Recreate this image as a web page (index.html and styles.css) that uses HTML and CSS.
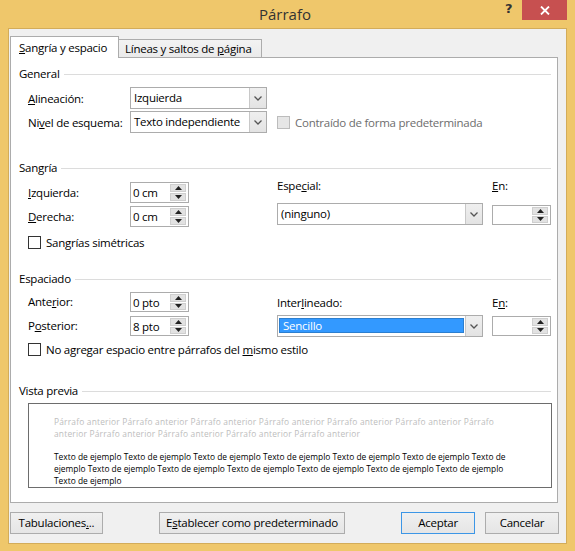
FILE: index.html
```html
<!DOCTYPE html>
<html lang="es">
<head>
<meta charset="utf-8">
<title>Párrafo</title>
<link rel="stylesheet" href="styles.css">
</head>
<body>
<div class="window">
  <div class="titlebar">
    <div class="title">Párrafo</div>
    <div class="help">?</div>
    <div class="close">
      <svg width="10" height="9" viewBox="0 0 10 9"><path d="M1 0.5 L9 8.5 M9 0.5 L1 8.5" stroke="#fff" stroke-width="1.8" fill="none"/></svg>
    </div>
  </div>
  <div class="client">
    <div class="tabs">
      <div class="tab active"><u>S</u>angría y espacio</div>
      <div class="tab">Líneas y saltos de <u>p</u>ágina</div>
    </div>
    <div class="page">
      <div class="ghead first">General</div>
      <div class="frow r1">
        <div class="flabel"><u>A</u>lineación:</div>
        <div class="select w137"><div class="val">Izquierda</div><div class="arrow"><svg width="8" height="5" viewBox="0 0 8 5"><path d="M0.5 0.5 L4 4 L7.5 0.5" stroke="#555" stroke-width="1.3" fill="none"/></svg></div></div>
      </div>
      <div class="frow r2">
        <div class="flabel">Ni<u>v</u>el de esquema:</div>
        <div class="select w137"><div class="val">Texto independiente</div><div class="arrow"><svg width="8" height="5" viewBox="0 0 8 5"><path d="M0.5 0.5 L4 4 L7.5 0.5" stroke="#555" stroke-width="1.3" fill="none"/></svg></div></div>
        <div class="cbwrap dis"><div class="cb"></div><span>Contraído de forma predeterminada</span></div>
      </div>

      <div class="ghead sec">Sangría</div>
      <div class="grid g-sangria">
        <div class="lab a-end c1 ra"><u>I</u>zquierda:</div>
        <div class="spin c2 ra a-end"><div class="val">0 cm</div><div class="btns"><div class="sb"><svg width="7" height="4" viewBox="0 0 7 4"><path d="M0 4 L3.5 0 L7 4Z" fill="#222"/></svg></div><div class="sb"><svg width="7" height="4" viewBox="0 0 7 4"><path d="M0 0 L3.5 4 L7 0Z" fill="#222"/></svg></div></div></div>
        <div class="lab top c4 ra">Espe<u>c</u>ial:</div>
        <div class="lab top c6 ra"><u>E</u>n:</div>
        <div class="lab c1 rb mt3"><u>D</u>erecha:</div>
        <div class="spin c2 rb mt3"><div class="val">0 cm</div><div class="btns"><div class="sb"><svg width="7" height="4" viewBox="0 0 7 4"><path d="M0 4 L3.5 0 L7 4Z" fill="#222"/></svg></div><div class="sb"><svg width="7" height="4" viewBox="0 0 7 4"><path d="M0 0 L3.5 4 L7 0Z" fill="#222"/></svg></div></div></div>
        <div class="select c4 rb"><div class="val">(ninguno)</div><div class="arrow"><svg width="8" height="5" viewBox="0 0 8 5"><path d="M0.5 0.5 L4 4 L7.5 0.5" stroke="#555" stroke-width="1.3" fill="none"/></svg></div></div>
        <div class="spin small c6 rb mt2"><div class="val"></div><div class="btns"><div class="sb"><svg width="7" height="4" viewBox="0 0 7 4"><path d="M0 4 L3.5 0 L7 4Z" fill="#222"/></svg></div><div class="sb"><svg width="7" height="4" viewBox="0 0 7 4"><path d="M0 0 L3.5 4 L7 0Z" fill="#222"/></svg></div></div></div>
      </div>
      <div class="cbrow cb-s"><div class="cb"></div><span>San<u>g</u>rías simétricas</span></div>

      <div class="ghead sec2">Espaciado</div>
      <div class="grid g-esp">
        <div class="lab lh20 a-end c1 ra">Ante<u>r</u>ior:</div>
        <div class="spin small c2 ra a-end"><div class="val">0 pto</div><div class="btns"><div class="sb"><svg width="7" height="4" viewBox="0 0 7 4"><path d="M0 4 L3.5 0 L7 4Z" fill="#222"/></svg></div><div class="sb"><svg width="7" height="4" viewBox="0 0 7 4"><path d="M0 0 L3.5 4 L7 0Z" fill="#222"/></svg></div></div></div>
        <div class="lab top8 c4 ra">Inter<u>l</u>ineado:</div>
        <div class="lab top8 c6 ra">E<u>n</u>:</div>
        <div class="lab lh20 c1 rb mt4">P<u>o</u>sterior:</div>
        <div class="spin small c2 rb mt4"><div class="val">8 pto</div><div class="btns"><div class="sb"><svg width="7" height="4" viewBox="0 0 7 4"><path d="M0 4 L3.5 0 L7 4Z" fill="#222"/></svg></div><div class="sb"><svg width="7" height="4" viewBox="0 0 7 4"><path d="M0 0 L3.5 4 L7 0Z" fill="#222"/></svg></div></div></div>
        <div class="select c4 rb mt3"><div class="val"><span class="hl">Sencillo</span></div><div class="arrow"><svg width="8" height="5" viewBox="0 0 8 5"><path d="M0.5 0.5 L4 4 L7.5 0.5" stroke="#555" stroke-width="1.3" fill="none"/></svg></div></div>
        <div class="spin small c6 rb mt4"><div class="val"></div><div class="btns"><div class="sb"><svg width="7" height="4" viewBox="0 0 7 4"><path d="M0 4 L3.5 0 L7 4Z" fill="#222"/></svg></div><div class="sb"><svg width="7" height="4" viewBox="0 0 7 4"><path d="M0 0 L3.5 4 L7 0Z" fill="#222"/></svg></div></div></div>
      </div>
      <div class="cbrow cb-e"><div class="cb"></div><span>No agregar espacio entre párrafos del <u>m</u>ismo estilo</span></div>

      <div class="ghead sec3">Vista previa</div>
      <div class="preview">
        <div class="prev-block gray">
          <div class="pl">Párrafo anterior Párrafo anterior Párrafo anterior Párrafo anterior Párrafo anterior Párrafo anterior Párrafo</div>
          <div class="pl">anterior Párrafo anterior Párrafo anterior Párrafo anterior Párrafo anterior</div>
        </div>
        <div class="prev-block sample">
          <div class="pl">Texto de ejemplo Texto de ejemplo Texto de ejemplo Texto de ejemplo Texto de ejemplo Texto de ejemplo Texto de</div>
          <div class="pl">ejemplo Texto de ejemplo Texto de ejemplo Texto de ejemplo Texto de ejemplo Texto de ejemplo Texto de ejemplo</div>
          <div class="pl">Texto de ejemplo</div>
        </div>
      </div>
    </div>
    <div class="buttons">
      <div class="btn b-tab">Tabulaciones<u>.</u>..</div>
      <div class="btn b-def">E<u>s</u>tablecer como predeterminado</div>
      <div class="btn b-ok">Aceptar</div>
      <div class="btn b-cancel">Cancelar</div>
    </div>
  </div>
</div>
</body>
</html>
```

FILE: styles.css
```css
* { box-sizing: border-box; }
html, body { margin: 0; padding: 0; }
body {
  width: 575px;
  height: 551px;
  overflow: hidden;
  background: #EFC76B;
  font-family: "Segoe UI", "Open Sans", sans-serif;
  font-size: 11.5px;
  letter-spacing: -0.25px;
  color: #000;
}
u { text-decoration: underline; text-underline-offset: 1px; }

.window { width: 575px; height: 551px; display: flex; flex-direction: column; }

.titlebar { height: 28px; display: flex; align-items: flex-start; }
.title { flex: 1; padding-left: 70px; text-align: center; font-size: 15px; line-height: 28px; color: #333; letter-spacing: 0; }
.help { width: 22px; padding-left: 5px; font-size: 13px; font-weight: bold; line-height: 18px; color: #333; font-family: "DejaVu Sans", sans-serif; letter-spacing: 0; }
.close { width: 45px; height: 20px; margin-right: 8px; background: #C75050; display: flex; align-items: center; justify-content: center; }

.client {
  margin: 0 8px 7px 8px;
  height: 516px;
  background: #F0F0F0;
  border: 1px solid #D3AC5A;
  display: flex;
  flex-direction: column;
}

.tabs { height: 28px; display: flex; align-items: flex-end; padding-left: 1px; }
.tab {
  border: 1px solid #ACACAC;
  border-bottom: none;
  background: linear-gradient(#F3F3F3, #EAEAEA);
  color: #000;
}
.tab.active {
  position: relative;
  z-index: 2;
  width: 109px;
  height: 22px;
  margin-bottom: -1px;
  background: #fff;
  padding-left: 8px;
  line-height: 22px;
}
.tab + .tab {
  width: 145px;
  height: 18px;
  margin-left: -2px;
  padding-left: 7px;
  line-height: 17px;
}

.page {
  position: relative;
  z-index: 1;
  margin-left: 1px;
  width: 548px;
  height: 446px;
  background: #fff;
  border: 1px solid #ACACAC;
  padding: 0 6px 0 8px;
}

.ghead { display: flex; align-items: center; height: 16px; line-height: 16px; }
.ghead::after { content: ""; flex: 1; height: 1px; background: #DCDCDC; margin-left: 4px; }
.ghead.first { margin-top: 8px; }
.ghead.sec { margin-top: 27px; }
.ghead.sec2 { margin-top: 22px; }
.ghead.sec3 { margin-top: 27px; }

.frow { display: flex; align-items: center; height: 22px; padding-left: 9px; }
.frow.r1 { margin-top: 5px; }
.frow.r2 { margin-top: 2px; }
.flabel { width: 102px; }

.select {
  height: 22px;
  border: 1px solid #ACACAC;
  background: #fff;
  display: flex;
}
.select.w137 { width: 137px; }
.select .val { flex: 1; padding-left: 3px; line-height: 20px; white-space: nowrap; overflow: hidden; }
.select .arrow {
  width: 17px;
  background: linear-gradient(#EFEFEF, #E3E3E3);
  border-left: 1px solid #C8C8C8;
  display: flex;
  align-items: center;
  justify-content: center;
}
.hl {
  display: block;
  margin: 2px 1px 2px -2px;
  height: 15px;
  line-height: 13px;
  background: #3399FF;
  color: #fff;
  padding-left: 3px;
  border: 1px solid #2C7FD0;
}

.cbwrap { display: flex; align-items: center; margin-left: 10px; }
.cb { width: 13px; height: 13px; border: 1px solid #333; background: #fff; flex: none; }
.cbwrap span, .cbrow span { margin-left: 5px; }
.cbwrap.dis .cb { border-color: #BCBCBC; background: #E6E6E6; }
.cbwrap.dis span { color: #6D6D6D; }

.cbrow { display: flex; align-items: center; height: 13px; padding-left: 9px; }
.cb-s { margin-top: 9px; }
.cb-e { margin-top: 6px; }

.grid {
  display: grid;
  grid-template-columns: 102px 59px 88px 206px 9px 59px;
  padding-left: 9px;
}
.g-sangria { grid-template-rows: 27px 24px; }
.g-esp { grid-template-rows: 25px 25px; }
.c1 { grid-column: 1; }
.c2 { grid-column: 2; }
.c4 { grid-column: 4; }
.c6 { grid-column: 6; }
.ra { grid-row: 1; }
.rb { grid-row: 2; }
.a-end { align-self: end; }
.lab { line-height: 21px; }
.lab.lh20 { line-height: 20px; }
.lab.top { align-self: start; margin-top: 2px; line-height: 16px; }
.lab.top8 { align-self: start; margin-top: 8px; line-height: 16px; }
.rb { align-self: start; }
.mt2 { margin-top: 2px; }
.mt3 { margin-top: 3px; }
.mt4 { margin-top: 4px; }

.spin {
  width: 59px;
  height: 21px;
  border: 1px solid #ACACAC;
  background: #fff;
  display: flex;
}
.spin.small { height: 20px; }
.spin .val { flex: 1; padding-left: 2px; line-height: 19px; white-space: nowrap; }
.spin .btns { width: 16px; margin: 1px 2px 1px 0; display: flex; flex-direction: column; gap: 1px; }
.sb {
  flex: 1;
  background: #E2E2E2;
  border: 1px solid #CFCFCF;
  display: flex;
  align-items: center;
  justify-content: center;
}

.preview {
  margin: 4px 0 0 9px;
  width: 524px;
  height: 85px;
  border: 1px solid #6D6D6D;
  background: #fff;
  overflow: hidden;
  padding: 12px 0 0 25px;
  font-family: "Open Sans", sans-serif;
  font-size: 8.4px;
  letter-spacing: 0;
  line-height: 12px;
}
.pl { white-space: nowrap; }
.gray { color: #BDBDBD; letter-spacing: 0.2px; }
.sample { margin-top: 11px; color: #000; }

.buttons { display: flex; margin-top: 9px; height: 22px; }
.btn {
  height: 22px;
  border: 1px solid #ACACAC;
  background: linear-gradient(#F0F0F0, #E5E5E5);
  text-align: center;
  line-height: 20px;
  white-space: nowrap;
}
.b-tab { margin-left: 1px; width: 93px; }
.b-def { margin-left: 56px; width: 186px; }
.b-ok { margin-left: 56px; width: 74px; border-color: #3C96E6; }
.b-cancel { margin-left: 10px; width: 74px; }
```
